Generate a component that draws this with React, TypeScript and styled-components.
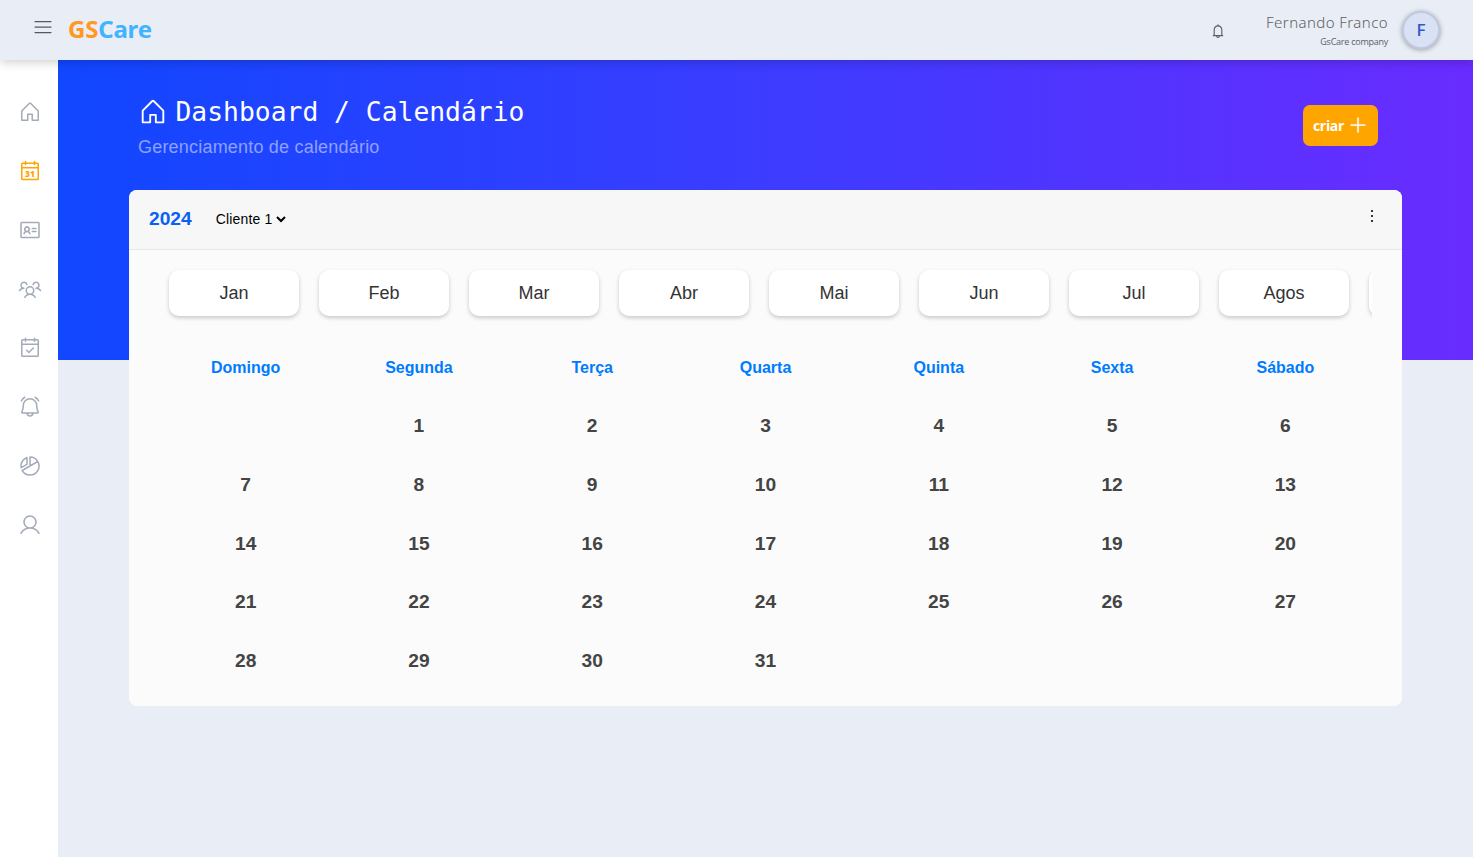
import React from "react";
import styled, { createGlobalStyle } from "styled-components";
import {
  PiHouse,
  PiIdentificationCard,
  PiUsersThree,
  PiCalendarCheck,
  PiBellRinging,
  PiUser,
  PiPlus,
} from "react-icons/pi";
import { AiOutlineBell } from "react-icons/ai";

const GlobalStyle = createGlobalStyle`
  * { box-sizing: border-box; }
  body {
    margin: 0;
    background: #e9edf5;
    font-family: "Liberation Sans", Arial, sans-serif;
    overflow: hidden;
  }
`;

const Page = styled.div`
  display: flex;
  flex-direction: column;
  height: 857px;
`;

const TopBar = styled.header`
  display: flex;
  align-items: center;
  justify-content: space-between;
  flex: none;
  height: 60px;
  padding: 0 33px 0 31px;
  background: #e9edf5;
  box-shadow: 0 2px 10px rgba(0, 0, 0, 0.2);
  position: relative;
  z-index: 2;
  font-family: "Open Sans", "Noto Sans", sans-serif;
`;

const Brand = styled.div`
  display: flex;
  align-items: center;
  gap: 13px;
  color: #55595f;
  svg { display: block; margin-bottom: 6px; }
`;

const Logo = styled.div`
  margin-bottom: 2px;
  font: 700 24px/32px "Noto Sans", "Open Sans", sans-serif;
  letter-spacing: -0.2px;
  color: #42b4ff;
  span { color: #ff9922; }
`;

const Account = styled.div`
  display: flex;
  align-items: center;
  color: #5c5f64;
`;

const BellSlot = styled.div`
  display: flex;
  margin: 1px 40px 0 0;
`;

const Names = styled.div`
  display: flex;
  flex-direction: column;
  align-items: flex-end;
  margin: 0 14px 1px 0;
`;

const UserName = styled.div`
  font-family: "Noto Sans", sans-serif;
  font-size: 15px;
  font-weight: 300;
  line-height: 20px;
  letter-spacing: 0.42px;
`;

const Company = styled.div`
  margin-top: 3px;
  font-size: 9px;
  line-height: 13px;
  letter-spacing: -0.25px;
`;

const Avatar = styled.div`
  display: flex;
  align-items: center;
  justify-content: center;
  width: 38px;
  height: 38px;
  padding-bottom: 2px;
  border-radius: 50%;
  border: 2px solid #c0cade;
  background: #d9e2f5;
  color: #3558c8;
  font: 600 17px/1 "Open Sans", sans-serif;
  box-shadow: 0 1px 5px rgba(0, 0, 0, 0.35);
`;

const Body = styled.div`
  display: flex;
  flex: 1;
  min-height: 0;
`;

const Sidebar = styled.nav`
  display: flex;
  flex-direction: column;
  align-items: center;
  flex: none;
  gap: 35px;
  width: 58px;
  padding: 40px 0 0 2px;
  background: #fff;
`;

const NavItem = styled.a<{ $active?: boolean }>`
  display: flex;
  height: 24px;
  color: ${(p) => (p.$active ? "#ffa500" : "#a3abb8")};
`;

const Main = styled.main`
  flex: 1;
  min-width: 0;
  padding: 0 71px;
  background: linear-gradient(90deg, #1147ff 0%, #3c3cff 50%, #692cff 100%) top / 100% 300px no-repeat;
`;

const Heading = styled.div`
  display: flex;
  justify-content: space-between;
  align-items: flex-start;
  height: 130px;
  padding: 36px 24px 0 9px;
`;

const Title = styled.h1`
  display: flex;
  align-items: center;
  gap: 7.5px;
  margin: 0;
  height: 32px;
  color: #fff;
  font: 400 26.35px/32px "DejaVu Sans Mono", monospace;
  svg { width: 30px; height: 30px; flex: none; }
`;

const Subtitle = styled.p`
  margin: 9px 0 0;
  color: rgba(255, 255, 255, 0.5);
  font-size: 18px;
  line-height: 21px;
  letter-spacing: 0.2px;
`;

const CreateButton = styled.button`
  display: flex;
  align-items: center;
  justify-content: center;
  gap: 4px;
  width: 75px;
  height: 41px;
  margin-top: 9px;
  padding: 0;
  border: 0;
  border-radius: 7px;
  background: #ffa500;
  color: #fff;
  font: 700 14px/20px "Open Sans", sans-serif;
  letter-spacing: -0.3px;
  svg { margin-bottom: 2px; stroke: currentColor; stroke-width: 5px; }
`;

const Panel = styled.section`
  height: 516px;
  border-radius: 8px;
  background: #fbfbfb;
  overflow: hidden;
`;

const PanelHeader = styled.div`
  display: flex;
  align-items: center;
  height: 60px;
  padding: 0 20px;
  background: #f7f7f7;
  border-bottom: 1px solid #e8e8e8;
`;

const Year = styled.strong`
  color: #0a60f5;
  font-size: 19.2px;
  line-height: 20px;
  margin: 0 20px 2px 0;
`;

const ClientSelect = styled.select`
  border: 0;
  padding: 0;
  margin-bottom: 2px;
  background: transparent;
  color: #000;
  font: 14px/18px "Liberation Sans", Arial, sans-serif;
  letter-spacing: 0.16px;
`;

const Dots = styled.div`
  display: flex;
  flex-direction: column;
  gap: 3px;
  margin: 0 9px 7px auto;
  i { width: 2px; height: 2px; background: #333; }
`;

const PanelBody = styled.div`
  padding: 0 30px;
`;

const Months = styled.div`
  display: flex;
  gap: 20px;
  height: 88px;
  padding: 20px 10px 0;
  overflow: hidden;
`;

const Month = styled.div`
  display: flex;
  align-items: center;
  justify-content: center;
  flex: none;
  width: 130px;
  height: 46px;
  border-radius: 10px;
  background: #fff;
  color: #333;
  font-size: 18px;
  box-shadow: 0 2px 4px rgba(0, 0, 0, 0.2);
`;

const Calendar = styled.div`
  display: grid;
  grid-template-columns: repeat(7, 1fr);
  grid-template-rows: 59px repeat(5, 58.7px);
`;

const Weekday = styled.div`
  display: flex;
  align-items: center;
  justify-content: center;
  color: #007bff;
  font-weight: 700;
  font-size: 16px;
`;

const Day = styled.div`
  display: flex;
  align-items: center;
  justify-content: center;
  color: #444;
  font-weight: 700;
  font-size: 19.2px;
`;

const Outline = styled.svg`
  fill: none;
  stroke: currentColor;
  stroke-width: 1.5;
  stroke-linecap: round;
  stroke-linejoin: round;
`;

const DateText = styled.text`
  fill: currentColor;
  stroke: none;
  font: 800 8.5px "Open Sans", sans-serif;
`;

function CalendarDateIcon({ size }: { size: number }) {
  return (
    <Outline width={size} height={size} viewBox="0 0 24 24">
      <rect x="3.75" y="4.25" width="16.5" height="16.25" rx="0.75" />
      <path d="M3.75 8.75h16.5M7.5 2.5v3M16.5 2.5v3" />
      <DateText x="12" y="17.9" textAnchor="middle">31</DateText>
    </Outline>
  );
}

function PieIcon({ size }: { size: number }) {
  return (
    <Outline width={size} height={size} viewBox="0 0 24 24">
      <path d="M12 3v9M4.2 16.5 19.8 7.5M12 3a9 9 0 1 1-7.8 13.5" />
      <path d="M9 10.3V3.5A9 9 0 0 0 3.1 13.7Z" />
    </Outline>
  );
}

function MenuIcon({ size }: { size: number }) {
  return (
    <Outline width={size} height={size} viewBox="0 0 24 24">
      <path d="M4 6.5h16M4 12h16M4 17.5h16" strokeWidth="1.25" />
    </Outline>
  );
}

const nav = [
  PiHouse,
  CalendarDateIcon,
  PiIdentificationCard,
  PiUsersThree,
  PiCalendarCheck,
  PiBellRinging,
  PieIcon,
  PiUser,
];
const months = ["Jan", "Feb", "Mar", "Abr", "Mai", "Jun", "Jul", "Agos", ""];
const weekdays = ["Domingo", "Segunda", "Terça", "Quarta", "Quinta", "Sexta", "Sábado"];
const days: (number | null)[] = [null, ...Array.from({ length: 31 }, (_, i) => i + 1)];

export default function App() {
  return (
    <Page>
      <GlobalStyle />
      <TopBar>
        <Brand>
          <MenuIcon size={24} />
          <Logo>
            <span>GS</span>Care
          </Logo>
        </Brand>
        <Account>
          <BellSlot>
            <AiOutlineBell size={16} />
          </BellSlot>
          <Names>
            <UserName>Fernando Franco</UserName>
            <Company>GsCare company</Company>
          </Names>
          <Avatar>F</Avatar>
        </Account>
      </TopBar>
      <Body>
        <Sidebar>
          {nav.map((Icon, i) => (
            <NavItem key={i} $active={i === 1}>
              <Icon size={24} />
            </NavItem>
          ))}
        </Sidebar>
        <Main>
          <Heading>
            <div>
              <Title>
                <PiHouse />
                Dashboard / Calendário
              </Title>
              <Subtitle>Gerenciamento de calendário</Subtitle>
            </div>
            <CreateButton>
              criar <PiPlus size={20} />
            </CreateButton>
          </Heading>
          <Panel>
            <PanelHeader>
              <Year>2024</Year>
              <ClientSelect>
                <option>Cliente 1</option>
              </ClientSelect>
              <Dots>
                <i />
                <i />
                <i />
              </Dots>
            </PanelHeader>
            <PanelBody>
              <Months>
                {months.map((m) => (
                  <Month key={m}>{m}</Month>
                ))}
              </Months>
              <Calendar>
                {weekdays.map((d) => (
                  <Weekday key={d}>{d}</Weekday>
                ))}
                {days.map((d, i) => (
                  <Day key={i}>{d}</Day>
                ))}
              </Calendar>
            </PanelBody>
          </Panel>
        </Main>
      </Body>
    </Page>
  );
}
